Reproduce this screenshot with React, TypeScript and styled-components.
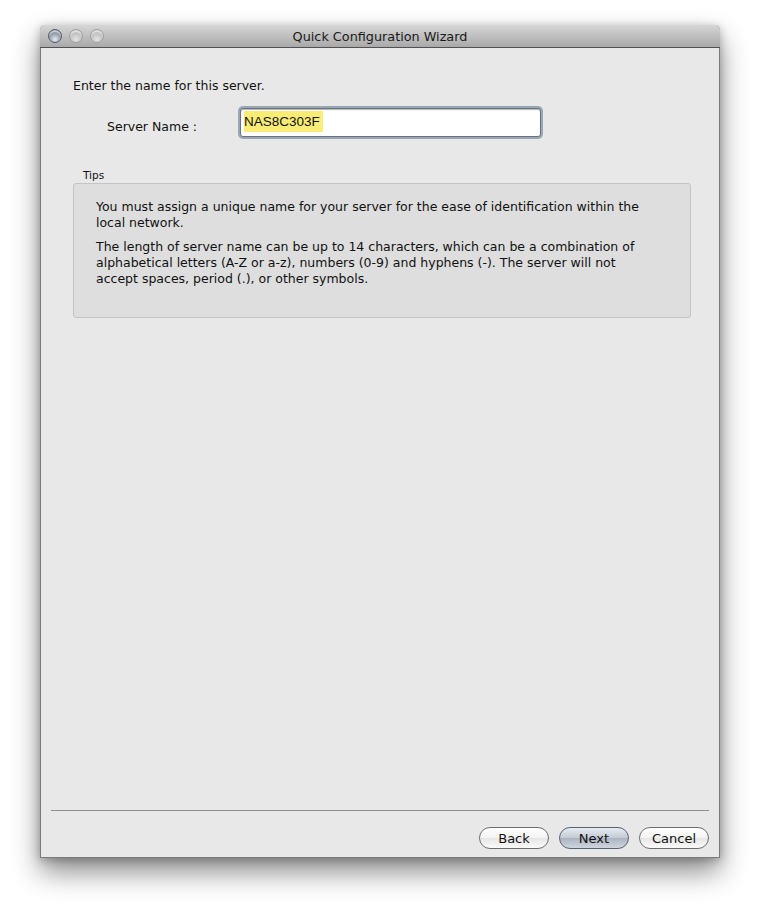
import React from "react";
import styled, { createGlobalStyle } from "styled-components";

const Global = createGlobalStyle`
  html, body { margin: 0; padding: 0; background: #ffffff; }
  body { font-family: "DejaVu Sans", "Liberation Sans", sans-serif; }
  * { box-sizing: border-box; }
`;

const Page = styled.div`
  width: 760px;
  height: 914px;
  padding: 25px 40px 0 40px;
`;

const Window = styled.div`
  width: 680px;
  height: 833px;
  display: flex;
  flex-direction: column;
  background: #e8e8e8;
  border: 1px solid #7a7a7a;
  border-top: none;
  border-radius: 5px 5px 0 0;
  box-shadow: 0 14px 28px rgba(0, 0, 0, 0.45), 0 2px 10px rgba(0, 0, 0, 0.25);
`;

const TitleBar = styled.div`
  position: relative;
  height: 23px;
  flex: none;
  display: flex;
  align-items: center;
  justify-content: center;
  background: linear-gradient(#d6d6d6, #a9a9a9);
  border-bottom: 1px solid #515151;
  border-radius: 5px 5px 0 0;
  margin: 0 -1px;
  font-size: 12.8px;
  color: #1a1a1a;
`;

const Lights = styled.div`
  position: absolute;
  left: 8px;
  top: 4px;
  display: flex;
  gap: 7px;
`;

const Light = styled.div<{ $active?: boolean }>`
  width: 14px;
  height: 14px;
  border-radius: 50%;
  border: 1px solid ${(p) => (p.$active ? "#535a68" : "#a0a0a0")};
  background: ${(p) =>
    p.$active
      ? "radial-gradient(circle at 50% 78%, #e6ebf2 0%, #9ea7b6 45%, #5f6777 100%)"
      : "radial-gradient(circle at 50% 78%, #e4e4e4 0%, #c4c4c4 50%, #aeaeae 100%)"};
  box-shadow: inset 0 2px 1px rgba(255, 255, 255, 0.6);
`;

const Content = styled.div`
  flex: 1;
  display: flex;
  flex-direction: column;
  padding: 30px 28px 0 32px;
  font-size: 12.5px;
  color: #111;
`;

const Intro = styled.div`
  line-height: 16px;
`;

const FieldRow = styled.div`
  display: flex;
  align-items: center;
  margin-top: 14px;
`;

const Label = styled.div`
  width: 167px;
  padding-left: 34px;
  padding-top: 8px;
`;

const Input = styled.div`
  width: 301px;
  height: 29px;
  background: #ffffff;
  border: 1px solid #6a7480;
  border-radius: 3px;
  box-shadow: 0 0 0 2px #9aa6b4, inset 0 1px 1px rgba(0, 0, 0, 0.3);
  padding: 2px 3px;
  display: flex;
  align-items: flex-start;
`;

const Selected = styled.span`
  background: #fbec75;
  font-family: "Liberation Sans", Arial, sans-serif;
  font-size: 13.5px;
  line-height: 21px;
  padding-right: 3px;
  color: #111;
`;

const TipsLabel = styled.div`
  margin: 32px 0 0 10px;
  font-size: 10.5px;
  line-height: 13px;
`;

const TipsBox = styled.div`
  margin-top: 1px;
  height: 135px;
  background: #dedede;
  border: 1px solid #c4c4c4;
  border-radius: 3px;
  padding: 15px 40px 0 22px;
  display: flex;
  flex-direction: column;
  gap: 8px;
`;

const Para = styled.p`
  margin: 0;
  line-height: 16px;
`;

const Footer = styled.div`
  flex: none;
  padding: 0 10px 8px 10px;
  display: flex;
  flex-direction: column;
`;

const Separator = styled.div`
  height: 1px;
  background: #8f8f8f;
  margin-bottom: 16px;
`;

const Buttons = styled.div`
  display: flex;
  justify-content: flex-end;
  gap: 10px;
`;

const Button = styled.div<{ $default?: boolean }>`
  width: 70px;
  height: 22px;
  border-radius: 11px;
  border: 1px solid ${(p) => (p.$default ? "#5a6270" : "#6e6e6e")};
  background: ${(p) =>
    p.$default
      ? "linear-gradient(#e6ebf1 0%, #c3cad4 50%, #aab3c0 51%, #cfd6df 100%)"
      : "linear-gradient(#ffffff 0%, #f4f4f4 50%, #e6e6e6 51%, #fbfbfb 100%)"};
  display: flex;
  align-items: center;
  justify-content: center;
  font-size: 13px;
  color: #111;
`;

export default function App() {
  return (
    <Page>
      <Global />
      <Window>
        <TitleBar>
          <Lights>
            <Light $active />
            <Light />
            <Light />
          </Lights>
          Quick Configuration Wizard
        </TitleBar>
        <Content>
          <Intro>Enter the name for this server.</Intro>
          <FieldRow>
            <Label>Server Name :</Label>
            <Input>
              <Selected>NAS8C303F</Selected>
            </Input>
          </FieldRow>
          <TipsLabel>Tips</TipsLabel>
          <TipsBox>
            <Para>
              You must assign a unique name for your server for the ease of identification within the
              local network.
            </Para>
            <Para>
              The length of server name can be up to 14 characters, which can be a combination of
              alphabetical letters (A-Z or a-z), numbers (0-9) and hyphens (-). The server will not
              accept spaces, period (.), or other symbols.
            </Para>
          </TipsBox>
        </Content>
        <Footer>
          <Separator />
          <Buttons>
            <Button>Back</Button>
            <Button $default>Next</Button>
            <Button>Cancel</Button>
          </Buttons>
        </Footer>
      </Window>
    </Page>
  );
}
